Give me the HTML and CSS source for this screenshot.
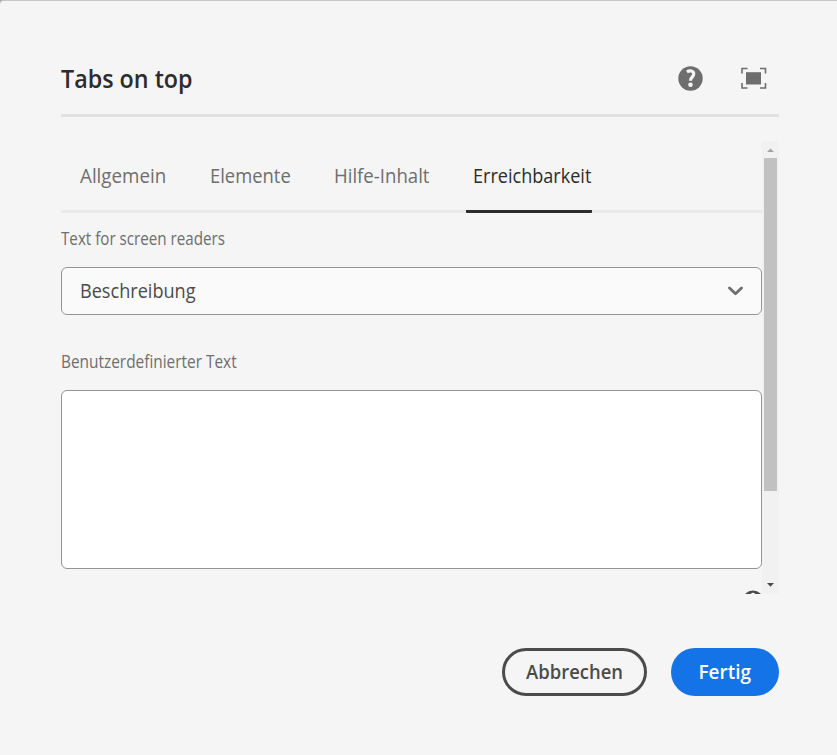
FILE: index.html
```html
<!DOCTYPE html>
<html lang="de">
<head>
<meta charset="utf-8">
<title>Tabs on top</title>
<link rel="stylesheet" href="styles.css">
</head>
<body>
<main class="dialog">
  <header class="header">
    <h1 class="title">Tabs on top</h1>
    <div class="actions">
      <svg class="help" viewBox="0 0 26 26"><circle cx="12.500" cy="13.500" r="12.200" fill="#6e6e6e"/><path d="M8.900 6.900C12 5 15.700 5.900 15.700 8.900c0 3.300-3.300 3.200-3.200 6.800" fill="none" stroke="#f5f5f5" stroke-width="3.200"/><circle cx="12.500" cy="19.700" r="2.300" fill="#f5f5f5"/></svg>
      <svg class="expand" viewBox="0 0 26 22"><path d="M1 6.500V1.500h5.500M19 1.500h5.500v5M24.500 16v5H19M6.500 21H1v-5" fill="none" stroke="#6e6e6e" stroke-width="1.600"/><path d="M5 5.200h15v12.300H5z" fill="#6e6e6e"/></svg>
    </div>
  </header>
  <section class="body">
    <div class="content">
      <nav class="tabs">
        <a class="tab tab-general"><span>Allgemein</span></a>
        <a class="tab tab-elements"><span>Elemente</span></a>
        <a class="tab tab-help"><span>Hilfe-Inhalt</span></a>
        <a class="tab tab-access selected"><span>Erreichbarkeit</span></a>
      </nav>
      <div class="label label-reader"><span>Text for screen readers</span></div>
      <div class="select"><span class="value">Beschreibung</span><svg class="chevron" viewBox="0 0 16 10"><path d="M1.500 2l6 5.700L13.500 2" fill="none" stroke="#6e6e6e" stroke-width="2.800" stroke-linecap="round" stroke-linejoin="round"/></svg></div>
      <div class="label label-custom"><span>Benutzerdefinierter Text</span></div>
      <div class="textarea"></div>
      <svg class="info" viewBox="0 0 22 22"><circle cx="11" cy="11" r="10.500" fill="#4b4b4b"/><circle cx="11" cy="5" r="2.300" fill="#f5f5f5"/></svg>
    </div>
    <div class="scrollbar">
      <svg class="arrow" viewBox="0 0 17 17"><path d="M5 11h7L8.500 7.400z" fill="#a3a3a3"/></svg>
      <div class="track"><div class="thumb"></div></div>
      <svg class="arrow" viewBox="0 0 17 17"><path d="M5 6h7L8.500 9.800z" fill="#4b4b4b"/></svg>
    </div>
  </section>
  <footer class="footer">
    <button class="button cancel"><span>Abbrechen</span></button>
    <button class="button done"><span>Fertig</span></button>
  </footer>
</main>
</body>
</html>
```
FILE: styles.css
```css
* { box-sizing: border-box; }
body { margin: 0; background: #a8a8a8; font-family: "Open Sans", sans-serif; color: #4b4b4b; }
.dialog { height: 755px; padding: 42px 58px 0 61px; background: #f5f5f5; border-top: 1px solid #c6c6c6; border-radius: 4px 0 0 0; }
.header { height: 74px; display: flex; justify-content: space-between; align-items: flex-start; border-bottom: 3px solid #e1e1e1; }
.title { margin: 17px 0 0; font-size: 25px; line-height: 36px; font-weight: 600; color: #2c2c2c; white-space: nowrap; transform: scaleX(.932); transform-origin: left; }
.actions { display: flex; align-items: center; gap: 37px; padding: 22px 12px 0 0; }
.help { width: 26px; height: 26px; }
.expand { width: 26px; height: 22px; }
.body { display: flex; height: 453px; margin-top: 24px; overflow: hidden; }
.content { width: 701px; }
.tabs { height: 72px; display: flex; padding-left: 12px; gap: 30px; border-bottom: 3px solid #e9e9e9; }
.tab { height: 72px; padding: 20px 0 0 7px; font-size: 20px; line-height: 30px; color: #6e6e6e; white-space: nowrap; }
.tab span, .label span, .value { display: inline-block; transform-origin: left; }
.tab-general { width: 93px; margin-right: 7px; }
.tab-elements { width: 94px; }
.tab-help { width: 109px; }
.tab-access { width: 126px; }
.tab-general span { transform: scaleX(.939); }
.tab-elements span { transform: scaleX(.92); }
.tab-help span { transform: scaleX(.93); }
.tab-access span { transform: scaleX(.903); }
.selected { color: #2c2c2c; border-bottom: 3px solid #2c2c2c; border-radius: 1px; }
.label { height: 24px; font-size: 17.5px; line-height: 24px; color: #6e6e6e; white-space: nowrap; }
.label-reader { margin-top: 13px; }
.label-custom { margin-top: 34px; }
.label-reader span { transform: scaleX(.867); }
.label-custom span { transform: scaleX(.88); }
.select { height: 48px; margin-top: 17px; display: flex; align-items: center; justify-content: space-between; padding: 0 17.5px 0 18px; background: #fafafa; border: 1px solid #959595; border-radius: 6px; font-size: 20px; }
.value { padding-bottom: 2px; transform: scaleX(.905); }
.chevron { width: 16px; height: 10px; }
.textarea { height: 179px; margin-top: 17px; background: #fff; border: 1px solid #959595; border-radius: 6px; }
.info { display: block; width: 22px; height: 22px; margin: 21px 0 0 681px; }
.scrollbar { width: 17px; height: 453px; background: #f1f1f1; display: flex; flex-direction: column; }
.arrow { width: 17px; height: 17px; flex: none; }
.track { flex: 1; padding: 0 2px; }
.thumb { height: 333px; background: #c1c1c1; }
.footer { display: flex; justify-content: flex-end; gap: 24px; margin-top: 54px; }
.button { height: 48px; padding: 0 0 2px; border-radius: 24px; font-family: inherit; font-size: 20px; font-weight: 600; white-space: nowrap; }
.button span { display: inline-block; transform: scaleX(.922); }
.done span { transform: scaleX(.95); }
.cancel { width: 145px; background: transparent; border: 3px solid #4b4b4b; color: #4b4b4b; }
.done { width: 108px; border: 0; background: #1473e6; color: #fff; }
```
